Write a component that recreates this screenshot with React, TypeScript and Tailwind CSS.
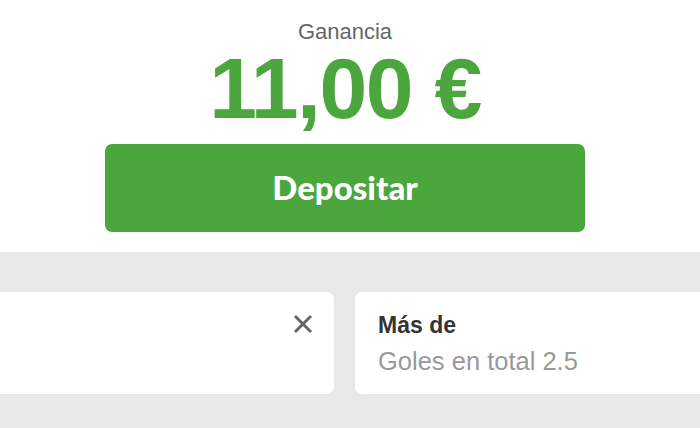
import React from "react";

export default function App() {
  return (
    <div className="w-[700px] h-[428px] overflow-hidden bg-[#e8e8e8] flex flex-col" style={{ fontFamily: '"Liberation Sans", Arial, sans-serif' }}>
      <div className="bg-white h-[252px] w-[700px]">
        <div className="w-[690px] flex flex-col items-center pt-[20px]">
          <div className="text-[22px] leading-[24px] text-[#666666]">Ganancia</div>
          <div className="text-[86px] leading-[88px] font-bold text-[#4ba63d] tracking-[-1.5px]">11,00 €</div>
          <button className="mt-[12px] w-[480px] h-[88px] rounded-[7px] bg-[#4ba63d] text-white text-[33px] font-black flex items-center justify-center" style={{ fontFamily: 'Lato, "Noto Sans", sans-serif' }}>
            Depositar
          </button>
        </div>
      </div>
      <div className="flex gap-[21px] mt-[40px] ml-[-40px]">
        <div className="shrink-0 w-[374px] h-[102px] bg-white rounded-[7px] flex justify-end pt-[21px] pr-[21px]">
          <svg width="20" height="20" viewBox="0 0 20 20" className="mt-[1px]">
            <path d="M2 2 L18 18 M18 2 L2 18" stroke="#666666" strokeWidth="3" strokeLinecap="butt" />
          </svg>
        </div>
        <div className="shrink-0 w-[400px] h-[102px] bg-white rounded-[7px] pl-[23px] pt-[19px]">
          <div className="text-[23px] leading-[28px] font-bold text-[#333333]">Más de</div>
          <div className="text-[25.5px] leading-[30px] text-[#999999] mt-[7px]">Goles en total 2.5</div>
        </div>
      </div>
    </div>
  );
}
